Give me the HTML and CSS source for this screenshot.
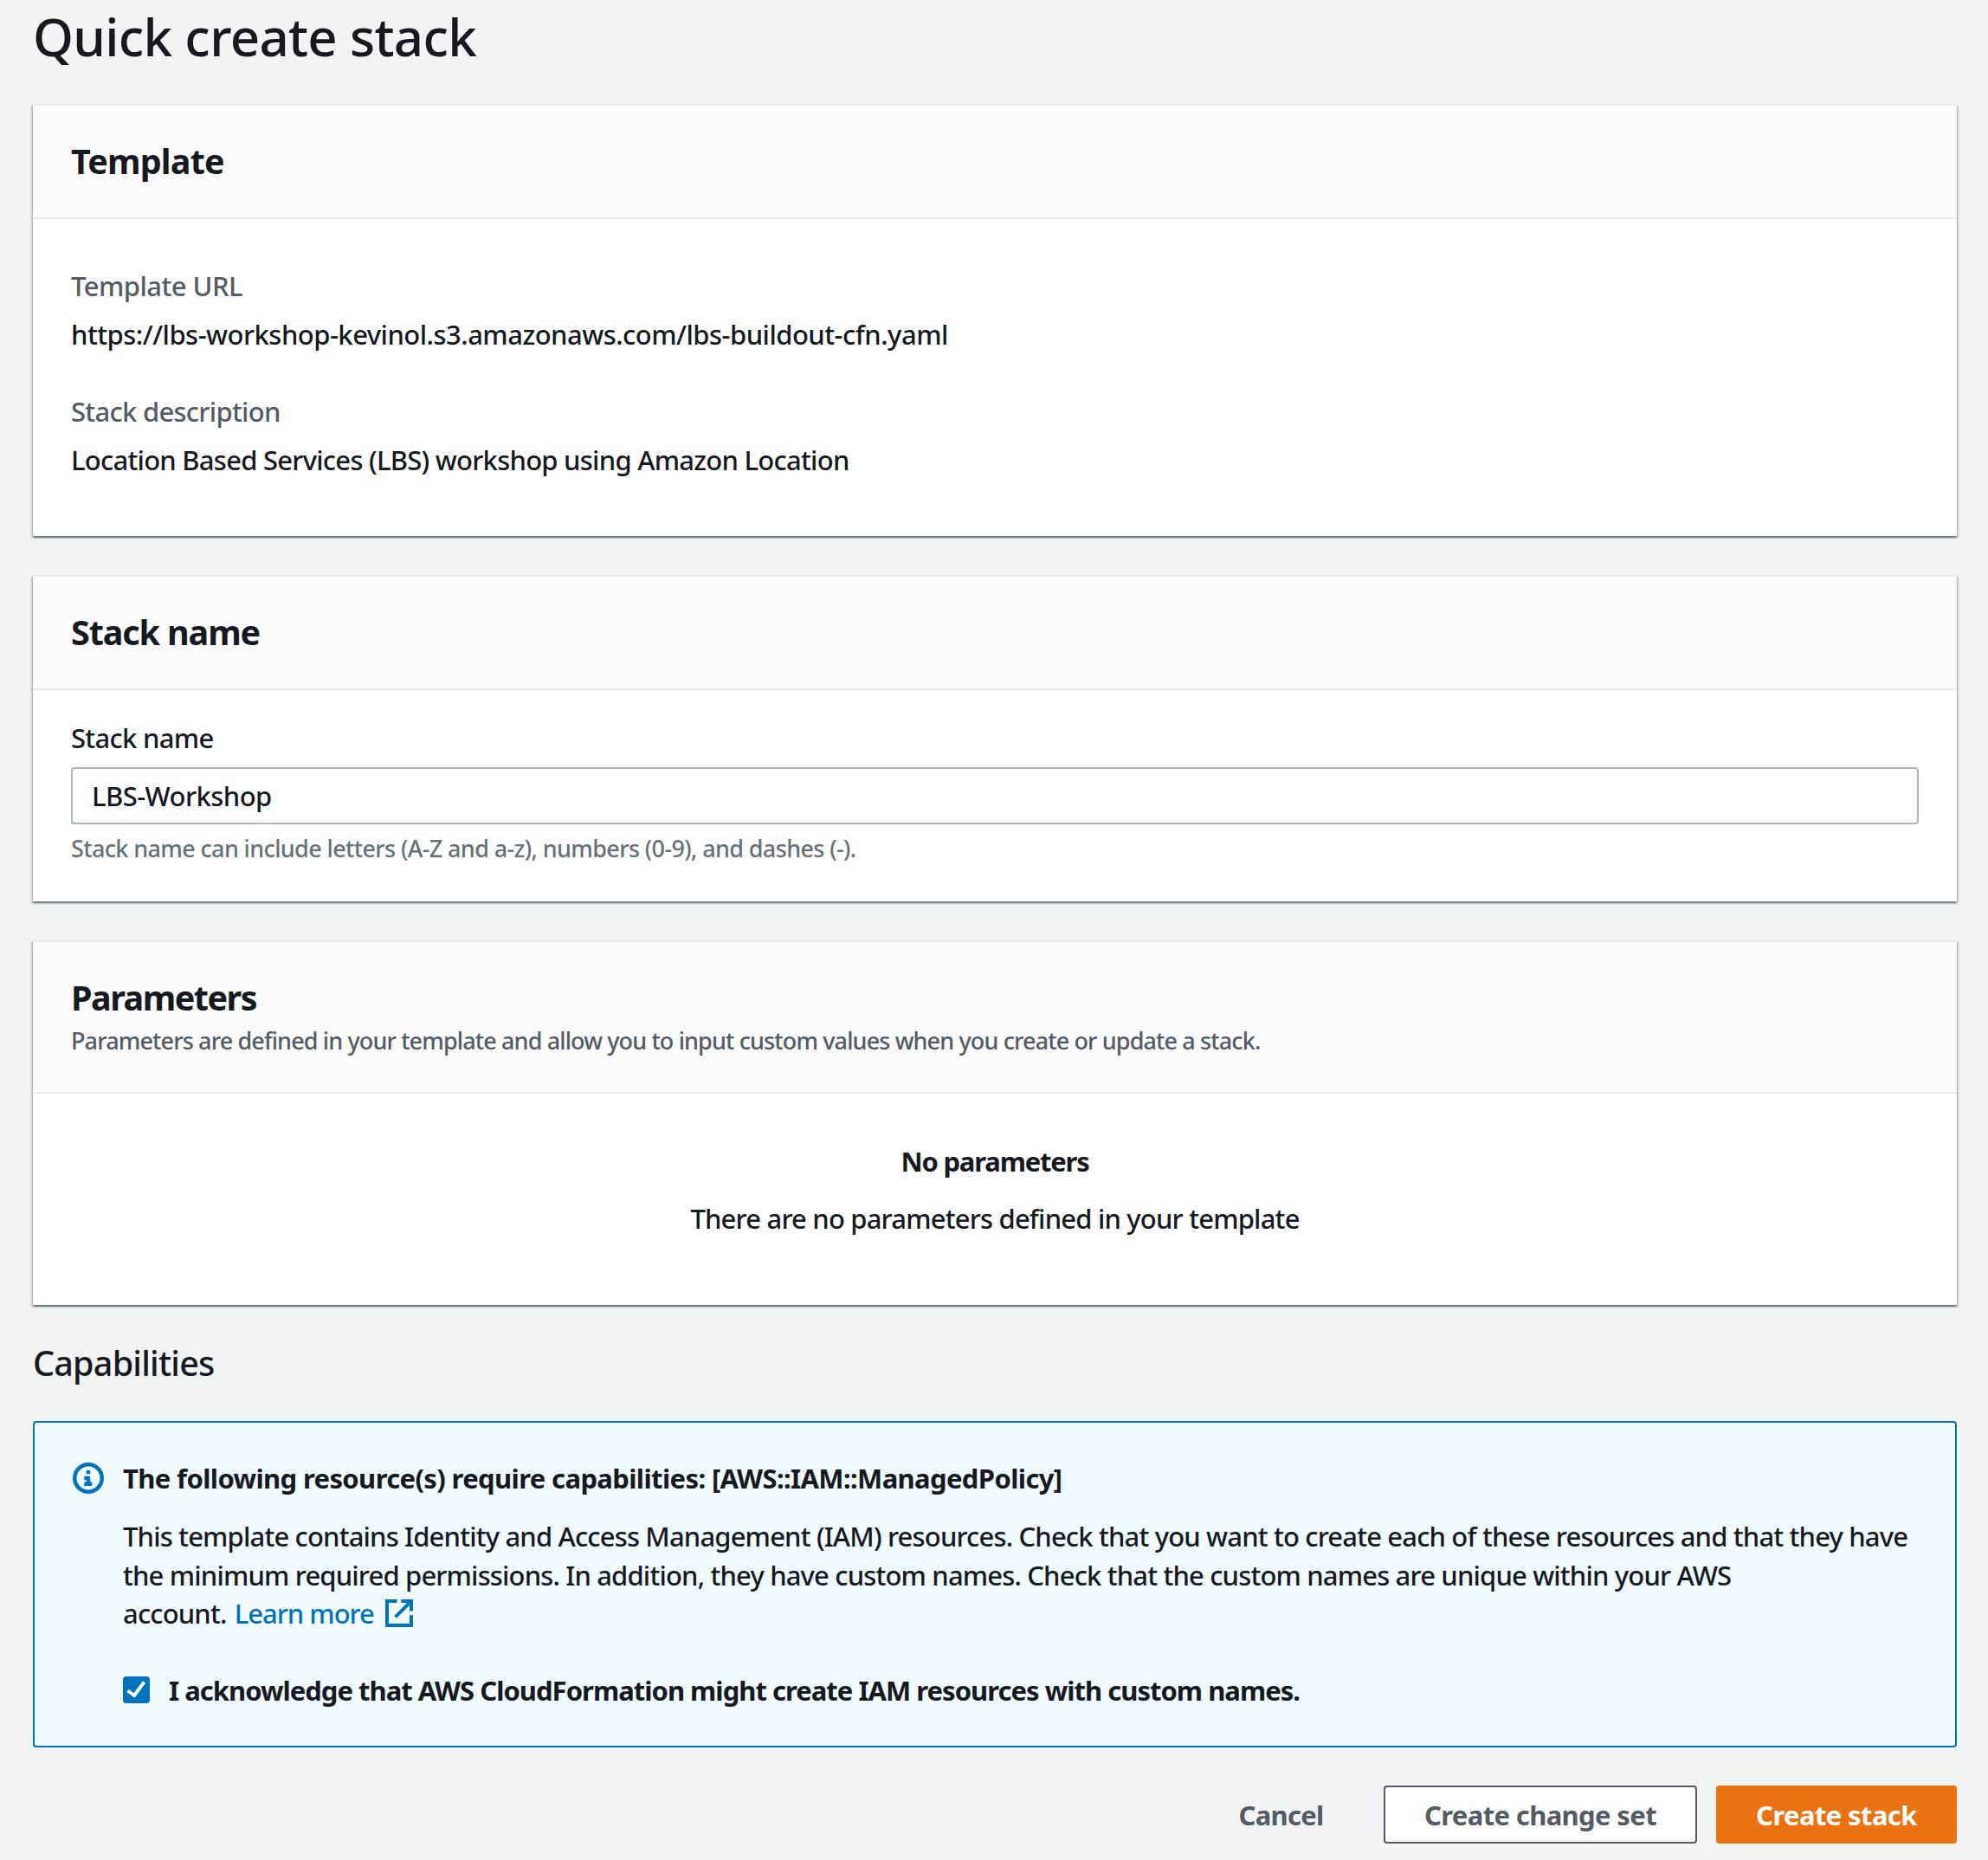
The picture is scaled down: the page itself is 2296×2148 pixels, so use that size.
FILE: index.html
```html
<!DOCTYPE html>
<html lang="en">
<head>
<meta charset="utf-8">
<title>Quick create stack</title>
<link rel="stylesheet" href="styles.css">
</head>
<body>
<main class="page">
  <h1 class="page-title">Quick create stack</h1>

  <section class="card">
    <header class="card-header"><h2 class="card-title title-template">Template</h2></header>
    <div class="details">
      <div class="detail">
        <div class="detail-label label-url">Template URL</div>
        <div class="value-url">https://lbs-workshop-kevinol.s3.amazonaws.com/lbs-buildout-cfn.yaml</div>
      </div>
      <div class="detail">
        <div class="detail-label">Stack description</div>
        <div class="value-description">Location Based Services (LBS) workshop using Amazon Location</div>
      </div>
    </div>
  </section>

  <section class="card">
    <header class="card-header"><h2 class="card-title title-stack">Stack name</h2></header>
    <div class="form">
      <label class="field-label" for="stack-name">Stack name</label>
      <input class="field-input" id="stack-name" type="text" value="LBS-Workshop">
      <p class="field-hint">Stack name can include letters (A-Z and a-z), numbers (0-9), and dashes (-).</p>
    </div>
  </section>

  <section class="card">
    <header class="card-header with-description">
      <h2 class="card-title title-parameters">Parameters</h2>
      <p class="card-description">Parameters are defined in your template and allow you to input custom values when you create or update a stack.</p>
    </header>
    <div class="empty">
      <strong class="empty-title">No parameters</strong>
      <p class="empty-text">There are no parameters defined in your template</p>
    </div>
  </section>

  <h2 class="section-title">Capabilities</h2>

  <section class="alert">
    <svg class="alert-icon" viewBox="0 0 16 16"><circle cx="8" cy="8" r="7" fill="none" stroke="#0073bb" stroke-width="2"/><path fill="#0073bb" d="M7 4h2v1.900H7zM5.900 7H9v3h.9v2h-4v-2H7V9H5.900z"/></svg>
    <div class="alert-content">
      <strong class="alert-title">The following resource(s) require capabilities: [AWS::IAM::ManagedPolicy]</strong>
      <p class="alert-text">This template contains Identity and Access Management (IAM) resources. Check that you want to create each of these resources and that they have<br>the minimum required permissions. In addition, they have custom names. Check that the custom names are unique within your AWS<br>account. <a class="link" href="#">Learn more<svg class="external" viewBox="0 0 16 16" fill="none" stroke="#0073bb" stroke-width="2"><path d="M6.700 1H1v14h14V9.100M9.100 1H15v5.700M15 1L5.800 10.200"/></svg></a></p>
      <label class="ack">
        <svg class="checkbox" viewBox="0 0 31 31"><rect width="31" height="31" rx="4" fill="#0073bb"/><path d="M5.500 16.500l7.500 5.500L24.500 6.500" fill="none" stroke="#fff" stroke-width="4"/></svg>
        <span>I acknowledge that AWS CloudFormation might create IAM resources with custom names.</span>
      </label>
    </div>
  </section>

  <footer class="actions">
    <button class="button button-link">Cancel</button>
    <button class="button button-normal">Create change set</button>
    <button class="button button-primary">Create stack</button>
  </footer>
</main>
</body>
</html>
```
FILE: styles.css
```css
* { box-sizing: border-box; }
body { margin: 0; background: #f2f3f3; color: #16191f; font: 500 31px/44px "Noto Sans", sans-serif; }
h1, h2, p { margin: 0; }

.page { padding: 6px 36px 19px 38px; }
.page-title { margin-bottom: 42px; font-size: 60px; line-height: 72px; font-weight: 500; letter-spacing: -.0114em; }

.card { margin-bottom: 45px; border-top: 2px solid #eaeded; background: #fff; box-shadow: 0 2px 2px rgba(0,28,36,.45), 2px 2px 2px rgba(0,28,36,.15), -2px 2px 2px rgba(0,28,36,.15); }
.card-header { padding: 42px 44px 43px; border-bottom: 2px solid #eaeded; background: #fafafa; }
.with-description { padding-bottom: 41px; }
.card-title { font-size: 39.5px; line-height: 44px; font-weight: 700; }
.title-template { letter-spacing: -.0205em; }
.title-stack { letter-spacing: -.0281em; }
.title-parameters { letter-spacing: -.038em; }
.card-description { margin-top: 10px; color: #545b64; font-size: 27px; line-height: 36px; letter-spacing: -.0324em; }

.details { display: flex; flex-direction: column; gap: 45px; padding: 55px 44px 66px; }
.detail { display: flex; flex-direction: column; gap: 12px; }
.detail-label { color: #545b64; letter-spacing: -.0232em; }
.label-url { letter-spacing: -.0175em; }
.value-url { letter-spacing: -.017em; }
.value-description { letter-spacing: -.0243em; }

.form { padding: 33px 44px 43px; }
.field-label { display: block; margin-bottom: 12px; letter-spacing: -.0229em; }
.field-input { display: block; width: 100%; height: 66px; padding: 0 22px; border: 2px solid #aab7b8; border-radius: 4px; background: #fff; color: inherit; font: inherit; letter-spacing: -.018em; }
.field-hint { margin-top: 10px; color: #687078; font-size: 27px; line-height: 36px; letter-spacing: -.0235em; }

.empty { display: flex; flex-direction: column; align-items: center; gap: 22px; padding: 56px 44px 78px; }
.empty-title { letter-spacing: -.0385em; }
.empty-text { letter-spacing: -.0264em; }

.section-title { margin-bottom: 45px; font-size: 39.5px; line-height: 44px; font-weight: 500; letter-spacing: -.0198em; }

.alert { display: flex; gap: 22px; padding: 42px 44px; border: 2px solid #0073bb; border-radius: 4px; background: #f1faff; }
.alert-icon { flex: none; width: 36px; height: 36px; margin-top: 4px; }
.alert-content { display: flex; flex-direction: column; }
.alert-title { letter-spacing: -.0204em; }
.alert-text { margin-top: 23px; line-height: 44.6px; letter-spacing: -.0273em; white-space: nowrap; }
.link { margin-left: 2px; color: #0073bb; text-decoration: none; letter-spacing: -.033em; }
.external { width: 32px; height: 32px; margin-left: 13px; vertical-align: -4px; }
.ack { display: flex; gap: 22px; margin-top: 44px; font-weight: 700; letter-spacing: -.0317em; }
.checkbox { width: 31px; height: 31px; margin-top: 6px; }

.actions { display: flex; justify-content: flex-end; gap: 22px; margin-top: 44px; }
.button { height: 67px; padding: 2px 0 0; border: 2px solid transparent; border-radius: 4px; background: none; color: #545b64; font: 700 31px/44px "Noto Sans", sans-serif; }
.button-link { width: 193px; letter-spacing: -.0237em; }
.button-normal { width: 362px; border-color: #545b64; background: #fff; letter-spacing: -.0205em; }
.button-primary { width: 278px; background: #ec7211; color: #fff; letter-spacing: -.0195em; }
```
